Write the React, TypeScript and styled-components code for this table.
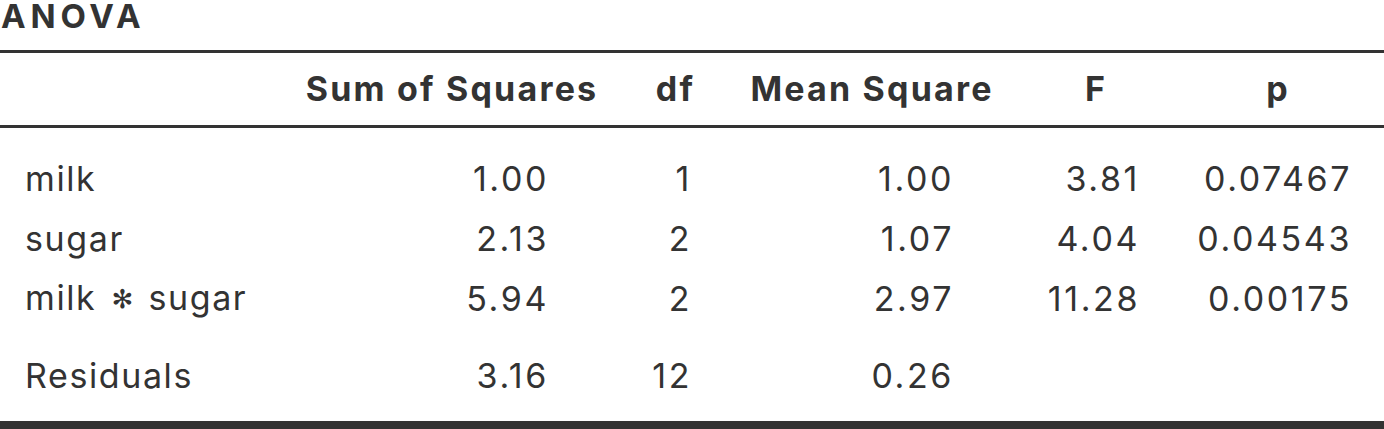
import React from "react";
import styled, { createGlobalStyle } from "styled-components";

const GlobalStyle = createGlobalStyle`
  html, body {
    margin: 0;
    padding: 0;
    background: #ffffff;
  }
  body {
    font-family: Inter, "Noto Sans", "DejaVu Sans", sans-serif;
    color: #333333;
  }
`;

const Page = styled.div`
  width: 1384px;
  height: 429px;
  overflow: hidden;
  display: flex;
  flex-direction: column;
`;

const Title = styled.h1`
  margin: 0 0 17px 0;
  padding-left: 1px;
  font-size: 33px;
  line-height: 33px;
  font-weight: 700;
  color: #333333;
  letter-spacing: 4.8px;
`;

const Table = styled.table`
  width: 1384px;
  border-collapse: collapse;
  table-layout: fixed;
  border-top: 3px solid #333333;
  border-bottom: 8px solid #333333;
  font-size: 34px;
  color: #333333;
`;

const HeaderCell = styled.th`
  font-weight: 700;
  text-align: center;
  white-space: nowrap;
  padding: 16px 0 17px 0;
  line-height: 39px;
  letter-spacing: 2.2px;
  border-bottom: 3px solid #333333;
`;

const NameCell = styled.td<{ $top?: number; $bottom?: number }>`
  text-align: left;
  white-space: nowrap;
  padding: ${(p) => 10 + (p.$top ?? 0)}px 0 ${(p) => 10 + (p.$bottom ?? 0)}px 25px;
  line-height: 39.5px;
  letter-spacing: 1.6px;
`;

const ValueCell = styled.td<{ $top?: number; $bottom?: number }>`
  text-align: right;
  white-space: nowrap;
  padding: ${(p) => 10 + (p.$top ?? 0)}px 0 ${(p) => 10 + (p.$bottom ?? 0)}px 0;
  line-height: 39.5px;
  letter-spacing: 2.6px;
`;

const SupCell = styled.td`
  padding: 0;
`;

const Interaction = styled.span`
  font-family: "DejaVu Sans", sans-serif;
  font-size: 26px;
  letter-spacing: 0;
  padding: 0 4px;
  vertical-align: 2px;
`;

type Row = {
  name: React.ReactNode;
  ss: string;
  df: string;
  ms: string;
  f: string;
  p: string;
  top?: number;
  bottom?: number;
};

const rows: Row[] = [
  { name: "milk", ss: "1.00", df: "1", ms: "1.00", f: "3.81", p: "0.07467", top: 21 },
  { name: "sugar", ss: "2.13", df: "2", ms: "1.07", f: "4.04", p: "0.04543" },
  {
    name: (
      <>
        milk <Interaction>✻</Interaction> sugar
      </>
    ),
    ss: "5.94",
    df: "2",
    ms: "2.97",
    f: "11.28",
    p: "0.00175",
  },
  { name: "Residuals", ss: "3.16", df: "12", ms: "0.26", f: "", p: "", top: 16, bottom: 16 },
];

const widths = [245, 32, 272, 78, 65, 32, 230, 66, 120, 32, 180, 32];

export default function App() {
  return (
    <Page>
      <GlobalStyle />
      <Title>ANOVA</Title>
      <Table>
        <colgroup>
          {widths.map((w, i) => (
            <col key={i} style={{ width: w }} />
          ))}
        </colgroup>
        <thead>
          <tr>
            <HeaderCell colSpan={2}></HeaderCell>
            <HeaderCell colSpan={2}>Sum of Squares</HeaderCell>
            <HeaderCell colSpan={2}>df</HeaderCell>
            <HeaderCell colSpan={2}>Mean Square</HeaderCell>
            <HeaderCell colSpan={2}>F</HeaderCell>
            <HeaderCell colSpan={2}>p</HeaderCell>
          </tr>
        </thead>
        <tbody>
          {rows.map((r, i) => (
            <tr key={i}>
              <NameCell colSpan={2} $top={r.top} $bottom={r.bottom}>
                {r.name}
              </NameCell>
              <ValueCell $top={r.top} $bottom={r.bottom}>{r.ss}</ValueCell>
              <SupCell />
              <ValueCell $top={r.top} $bottom={r.bottom}>{r.df}</ValueCell>
              <SupCell />
              <ValueCell $top={r.top} $bottom={r.bottom}>{r.ms}</ValueCell>
              <SupCell />
              <ValueCell $top={r.top} $bottom={r.bottom}>{r.f}</ValueCell>
              <SupCell />
              <ValueCell $top={r.top} $bottom={r.bottom}>{r.p}</ValueCell>
              <SupCell />
            </tr>
          ))}
        </tbody>
      </Table>
    </Page>
  );
}
